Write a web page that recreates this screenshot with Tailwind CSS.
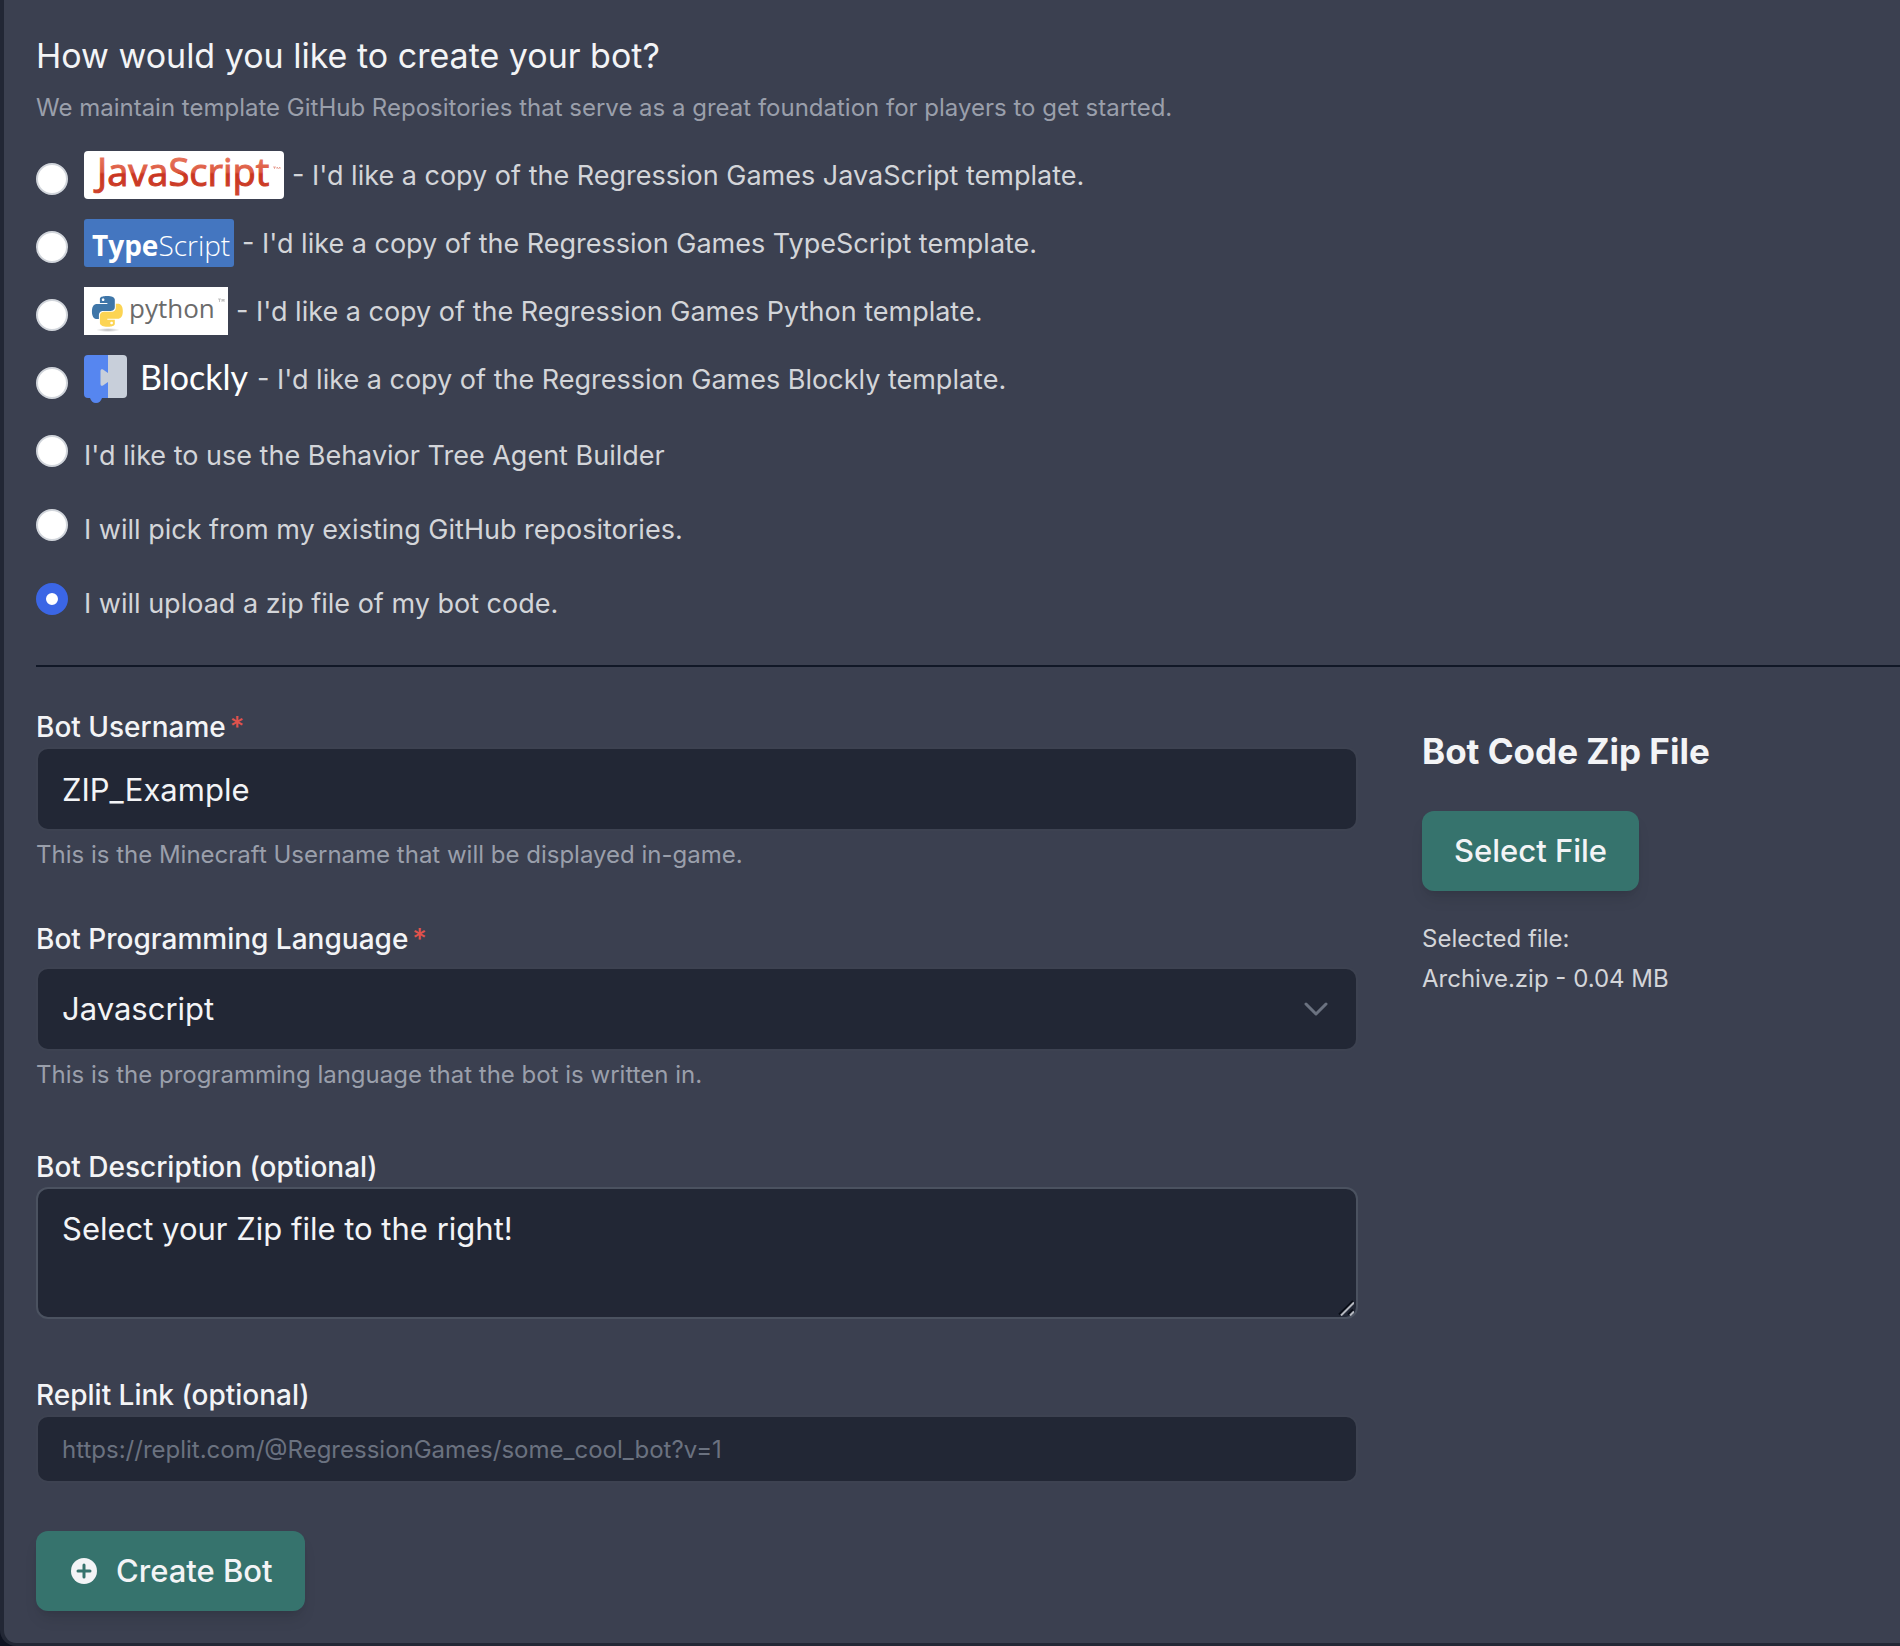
<!DOCTYPE html>
<html lang="en">
<head>
<meta charset="utf-8">
<meta name="viewport" content="width=device-width, initial-scale=1">
<title>Create a bot</title>
<script src="https://cdn.jsdelivr.net/npm/@tailwindcss/browser@4"></script>
</head>
<body class="bg-[#0e1321] font-['Inter',sans-serif] text-[#f3f4f6]">
<main class="min-h-screen rounded-bl-2xl border-b-3 border-l-4 border-[#222735] bg-[#3b4050] pt-8 pb-8 pl-8">
<form>
  <fieldset>
    <legend class="text-[34px] leading-12">How would you like to create your bot?</legend>
    <p class="mt-2 text-2xl leading-10 text-[#9a9fab]">We maintain template GitHub Repositories that serve as a great foundation for players to get started.</p>
    <div class="mt-[23px] flex flex-col gap-5 text-[27px] leading-12 text-[#d3d5d9]">
      <label class="flex h-12 items-center gap-4">
        <input type="radio" name="source" class="mt-2 size-8 shrink-0 appearance-none rounded-full border-2 border-[#d1d5db] bg-white checked:border-[10px] checked:border-[#3b66e5]">
        <span class="flex items-center gap-2">
          <svg class="h-12 w-[200px] shrink-0" viewBox="0 0 200 48" role="img" aria-label="JavaScript">
            <defs><linearGradient id="js" x1="0" y1="0" x2="0" y2="1"><stop offset="0.2" stop-color="#e8765e"/><stop offset="0.52" stop-color="#dc5a42"/><stop offset="0.56" stop-color="#c93420"/><stop offset="1" stop-color="#cf4630"/></linearGradient></defs>
            <rect width="200" height="48" rx="4" fill="#fff"/>
            <text x="13" y="35" font-family="Open Sans, sans-serif" font-size="38" fill="url(#js)" stroke="url(#js)" stroke-width="1">JavaScript</text>
            <path d="M189 16h3M190.500 16v2M193 18v-2l1.500 1.500L196 16v2" fill="none" stroke="#dd7a68" stroke-width="0.600"/>
          </svg>
          <span class="pt-0.5">- I'd like a copy of the Regression Games JavaScript template.</span>
        </span>
      </label>
      <label class="flex h-12 items-center gap-4">
        <input type="radio" name="source" class="mt-2 size-8 shrink-0 appearance-none rounded-full border-2 border-[#d1d5db] bg-white checked:border-[10px] checked:border-[#3b66e5]">
        <span class="flex items-center gap-2">
          <svg class="h-12 w-[150px] shrink-0" viewBox="0 0 150 48" role="img" aria-label="TypeScript">
            <rect width="150" height="48" rx="3" fill="#4476c0"/>
            <text x="8" y="37" font-family="Open Sans, sans-serif" font-size="28" fill="#fff"><tspan font-weight="700">Type</tspan><tspan font-weight="300">Script</tspan></text>
          </svg>
          <span class="pt-0.5">- I'd like a copy of the Regression Games TypeScript template.</span>
        </span>
      </label>
      <label class="flex h-12 items-center gap-4">
        <input type="radio" name="source" class="mt-2 size-8 shrink-0 appearance-none rounded-full border-2 border-[#d1d5db] bg-white checked:border-[10px] checked:border-[#3b66e5]">
        <span class="flex items-center gap-2">
          <svg class="h-12 w-36 shrink-0" viewBox="0 0 144 48" role="img" aria-label="Python">
            <defs><radialGradient id="pys"><stop stop-color="#b8b8b8"/><stop offset="1" stop-color="#fff"/></radialGradient></defs>
            <rect width="144" height="48" fill="#fff"/>
            <ellipse cx="24" cy="43" rx="12" ry="2" fill="url(#pys)"/>
            <g transform="translate(8 9) scale(1.28)">
              <path fill="#3f76a8" d="M14.25.18l.9.2.73.26.59.3.45.32.34.34.25.34.16.33.1.3.04.26.02.2-.01.13V8.5l-.05.63-.13.55-.21.46-.26.38-.3.31-.33.25-.35.19-.35.14-.33.1-.3.07-.26.04-.21.02H8.77l-.69.05-.59.14-.5.22-.41.27-.33.32-.27.35-.2.36-.15.37-.1.35-.07.32-.04.27-.02.21v3.06H3.17l-.21-.03-.28-.07-.32-.12-.35-.18-.36-.26-.36-.36-.35-.46-.32-.59-.28-.73-.21-.88-.14-1.05-.05-1.23.06-1.22.16-1.04.24-.87.32-.71.36-.57.4-.44.42-.33.42-.24.4-.16.36-.1.32-.05.24-.01h.16l.06.01h8.16v-.83H6.18l-.01-2.75-.02-.37.05-.34.11-.31.17-.28.25-.26.31-.23.38-.2.44-.18.51-.15.58-.12.64-.1.71-.06.77-.04.84-.02 1.27.05zm-6.3 1.98l-.23.33-.08.41.08.41.23.34.33.22.41.09.41-.09.33-.22.23-.34.08-.41-.08-.41-.23-.33-.33-.22-.41-.09-.41.09z"/>
              <path fill="#fcd453" d="M21.04 6.11l.28.06.32.12.35.18.36.27.36.35.35.47.32.59.28.73.21.88.14 1.04.05 1.23-.06 1.23-.16 1.04-.24.86-.32.71-.36.57-.4.45-.42.33-.42.24-.4.16-.36.09-.32.05-.24.02-.16-.01h-8.22v.82h5.84l.01 2.76.02.36-.05.34-.11.31-.17.29-.25.25-.31.24-.38.2-.44.17-.51.15-.58.13-.64.09-.71.07-.77.04-.84.01-1.27-.04-1.07-.14-.9-.2-.73-.25-.59-.3-.45-.33-.34-.34-.25-.34-.16-.33-.1-.3-.04-.25-.02-.2.01-.13v-5.34l.05-.64.13-.54.21-.46.26-.38.3-.32.33-.24.35-.2.35-.14.33-.1.3-.06.26-.04.21-.02.13-.01h5.84l.69-.05.59-.14.5-.21.41-.28.33-.32.27-.35.2-.36.15-.36.1-.35.07-.32.04-.28.02-.21V6.07h2.09l.14.01zm-6.47 14.25l-.23.33-.08.41.08.41.23.33.33.23.41.08.41-.08.33-.23.23-.33.08-.41-.08-.41-.23-.33-.33-.23-.41-.08-.41.08z"/>
            </g>
            <text x="45" y="31" font-family="Open Sans, sans-serif" font-size="26" fill="#6b6b6b">python</text>
            <path d="M134 12h3M135.500 12v3M138 15v-3l1 2 1-2v3" fill="none" stroke="#aaa" stroke-width="0.700"/>
          </svg>
          <span class="pt-0.5">- I'd like a copy of the Regression Games Python template.</span>
        </span>
      </label>
      <label class="flex h-12 items-center gap-4">
        <input type="radio" name="source" class="mt-2 size-8 shrink-0 appearance-none rounded-full border-2 border-[#d1d5db] bg-white checked:border-[10px] checked:border-[#3b66e5]">
        <span class="flex items-center gap-2">
          <svg class="h-12 w-[165px] shrink-0" viewBox="0 0 165 48" role="img" aria-label="Blockly">
            <path fill="#c8cfda" d="M20 0h19a4 4 0 0 1 4 4v35a4 4 0 0 1-4 4H20z"/>
            <path fill="#5686f0" d="M4 0h20v43h-6c-1 3-3 5-6 5s-5-2-6-5H4a4 4 0 0 1-4-4V4a4 4 0 0 1 4-4z"/>
            <path fill="#c8cfda" d="M24 18l-5-3.500c-1.200-.8-2.500-.3-2.500 1.500v13c0 1.800 1.300 2.300 2.500 1.500l5-3.500z"/>
            <text x="56" y="35" font-family="Lato, sans-serif" font-size="34" fill="#fff">Blockly</text>
          </svg>
          <span class="pt-0.5">- I'd like a copy of the Regression Games Blockly template.</span>
        </span>
      </label>
    </div>
    <div class="mt-7 flex flex-col gap-[34px] text-[27px] leading-10 text-[#d3d5d9]">
      <label class="flex h-10 items-start gap-4">
        <input type="radio" name="source" class="mt-1 size-8 shrink-0 appearance-none rounded-full border-2 border-[#d1d5db] bg-white checked:border-[10px] checked:border-[#3b66e5]">
        <span class="mt-[5px]">I'd like to use the Behavior Tree Agent Builder</span>
      </label>
      <label class="flex h-10 items-start gap-4">
        <input type="radio" name="source" class="mt-1 size-8 shrink-0 appearance-none rounded-full border-2 border-[#d1d5db] bg-white checked:border-[10px] checked:border-[#3b66e5]">
        <span class="mt-[5px]">I will pick from my existing GitHub repositories.</span>
      </label>
      <label class="flex h-10 items-start gap-4">
        <input type="radio" name="source" checked class="mt-1 size-8 shrink-0 appearance-none rounded-full border-2 border-[#d1d5db] bg-white checked:border-[10px] checked:border-[#3b66e5]">
        <span class="mt-[5px]">I will upload a zip file of my bot code.</span>
      </label>
    </div>
  </fieldset>
  <hr class="mt-[46px] border-t-2 border-[#111827]">
  <div class="grid grid-cols-[minmax(0,1fr)_478px] gap-16">
    <div class="flex flex-col pt-10">
      <label for="username" class="text-[28px] leading-10 font-medium">Bot Username<span class="ml-1 text-[#e0524c]">*</span></label>
      <input id="username" type="text" value="ZIP_Example" class="h-[84px] rounded-xl border-2 border-[#3d4251] bg-[#222735] px-6 text-[31px]">
      <p class="mt-1 text-2xl leading-10 text-[#9a9fab]">This is the Minecraft Username that will be displayed in-game.</p>

      <label for="language" class="mt-11 text-[28px] leading-10 font-medium">Bot Programming Language<span class="ml-1 text-[#e0524c]">*</span></label>
      <div class="mt-2 grid">
        <select id="language" class="col-start-1 row-start-1 h-[84px] w-full appearance-none rounded-xl border-2 border-[#3d4251] bg-[#222735] px-6 text-[31px]">
          <option>Javascript</option>
        </select>
        <svg class="pointer-events-none col-start-1 row-start-1 mr-[30px] size-6 self-center justify-self-end" viewBox="0 0 24 24" fill="none" stroke="#6b7280" stroke-width="3" stroke-linecap="round" stroke-linejoin="round" aria-hidden="true"><path d="M2 7l10 10L22 7"/></svg>
      </div>
      <p class="mt-1 text-2xl leading-10 text-[#9a9fab]">This is the programming language that the bot is written in.</p>

      <label for="description" class="mt-13 text-[28px] leading-10 font-medium">Bot Description (optional)</label>
      <div class="grid">
        <textarea id="description" class="col-start-1 row-start-1 h-[132px] resize-none rounded-xl border-2 border-[#4b5260] bg-[#222735] px-6 py-4 text-[31px] leading-12">Select your Zip file to the right!</textarea>
        <svg class="pointer-events-none col-start-1 row-start-1 mr-1 mb-[3px] size-4 self-end justify-self-end" viewBox="0 0 16 16" fill="none" aria-hidden="true"><path d="M1 14.500L15 1M10 14.500L15 9.500" stroke="#080c16" stroke-width="2"/><path d="M3 15.500L16 2.500M12 15.500L16 11.500" stroke="#b4b7be" stroke-width="2"/></svg>
      </div>

      <label for="replit" class="mt-14 text-[28px] leading-10 font-medium">Replit Link (optional)</label>
      <input id="replit" type="url" placeholder="https://replit.com/@RegressionGames/some_cool_bot?v=1" class="h-[68px] rounded-xl border-2 border-[#3d4251] bg-[#222735] px-6 text-2xl placeholder:text-[#6b7280]">

      <button type="submit" class="mt-12 flex h-20 items-center gap-4 self-start rounded-xl bg-[#36736d] px-8 text-[31px] font-medium shadow-lg">
        <svg class="size-8" viewBox="0 0 32 32" aria-hidden="true"><circle cx="16" cy="16" r="13" fill="#f3f4f6"/><path d="M16 10v12M10 16h12" stroke="#36736d" stroke-width="3" stroke-linecap="round"/></svg>
        Create Bot
      </button>
    </div>
    <section class="flex flex-col items-start pt-15">
      <h2 class="text-[35px] leading-12 font-bold">Bot Code Zip File</h2>
      <button type="button" class="mt-9 h-20 rounded-xl bg-[#36736d] px-8 text-[31px] font-medium shadow-lg">Select File</button>
      <p class="mt-7 text-2xl leading-10 text-[#d3d5d9]">Selected file:<br>Archive.zip - 0.04 MB</p>
    </section>
  </div>
</form>
</main>
</body>
</html>
